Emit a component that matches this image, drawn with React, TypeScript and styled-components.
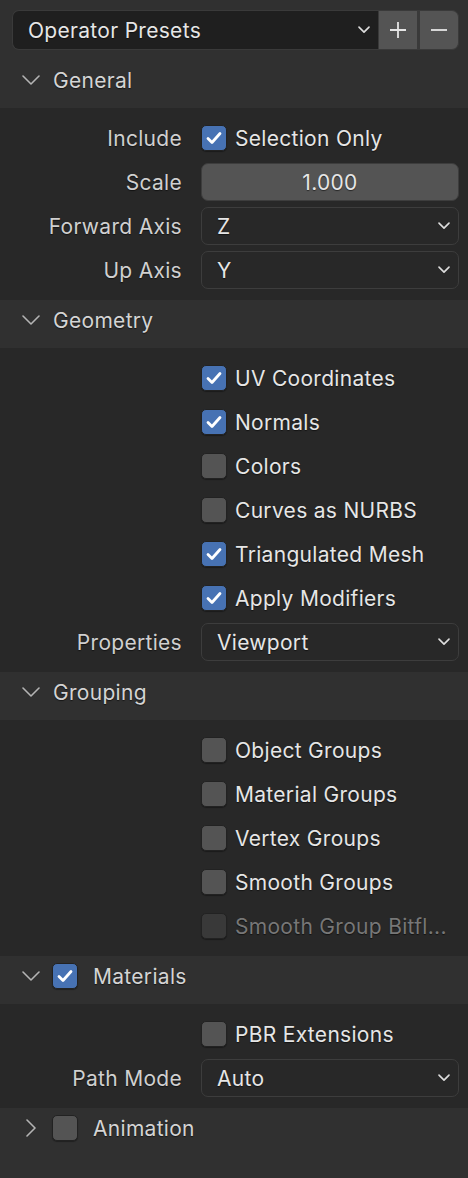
import React from 'react';
import styled, { createGlobalStyle } from 'styled-components';

const GlobalStyle = createGlobalStyle`
  html, body {
    margin: 0;
    padding: 0;
    background: #303030;
  }
  body {
    font-family: Inter, "Noto Sans", "Liberation Sans", sans-serif;
    -webkit-font-smoothing: antialiased;
  }
`;

const Panel = styled.div`
  width: 468px;
  min-height: 1178px;
  background: #303030;
  color: #e6e6e6;
  font-size: 21px;
  letter-spacing: 0.3px;
  text-shadow: 0 1px 1px rgba(0, 0, 0, 0.55);
`;

const PresetBar = styled.div`
  display: flex;
  height: 40px;
  padding: 10px 9px 10px 12px;
`;

const PresetSelect = styled.div`
  flex: 1;
  display: flex;
  align-items: center;
  justify-content: space-between;
  padding: 0 8px 0 15px;
  background: #1f1f1f;
  border: 1px solid #3a3a3a;
  border-right: none;
  border-radius: 7px 0 0 7px;
`;

const PresetButton = styled.div<{ $last?: boolean }>`
  width: 38px;
  display: flex;
  align-items: center;
  justify-content: center;
  background: #545454;
  border: 1px solid #3a3a3a;
  border-left: ${(p) => (p.$last ? '2px solid #3a3a3a' : '1px solid #3a3a3a')};
  border-radius: ${(p) => (p.$last ? '0 7px 7px 0' : '0')};
`;

const Header = styled.div`
  height: 48px;
  display: flex;
  align-items: center;
  padding: 0 0 8px 22px;
  box-sizing: border-box;
  background: #303030;
  color: #d4d4d4;
`;

const HeaderTitle = styled.span<{ $offset?: number }>`
  margin-left: ${(p) => p.$offset ?? 13}px;
`;

const Body = styled.div`
  background: #282828;
  padding: 8px 0 8px;
`;

const Row = styled.div`
  display: grid;
  grid-template-columns: 182px 1fr;
  column-gap: 19px;
  align-items: center;
  height: 44px;
  padding-right: 9px;
`;

const Label = styled.span`
  text-align: right;
  color: #d0d0d0;
`;

const CheckLine = styled.div<{ $disabled?: boolean }>`
  display: flex;
  align-items: center;
  gap: 8px;
  white-space: nowrap;
  color: ${(p) => (p.$disabled ? '#777777' : '#e6e6e6')};
`;

const Box = styled.div<{ $checked?: boolean; $disabled?: boolean }>`
  width: 26px;
  height: 26px;
  box-sizing: border-box;
  border-radius: 5px;
  border: 1px solid #222222;
  display: flex;
  align-items: center;
  justify-content: center;
  flex-shrink: 0;
  background: ${(p) => (p.$checked ? '#4772b3' : p.$disabled ? '#393939' : '#545454')};
  box-shadow: 0 1px 1px rgba(0, 0, 0, 0.35);
`;

const NumberField = styled.div`
  height: 38px;
  display: flex;
  align-items: center;
  justify-content: center;
  background: #545454;
  border: 1px solid #3d3d3d;
  border-radius: 7px;
  box-sizing: border-box;
`;

const SelectField = styled.div`
  height: 38px;
  display: flex;
  align-items: center;
  justify-content: space-between;
  padding: 0 8px 0 15px;
  background: #282828;
  border: 1px solid #3d3d3d;
  border-radius: 7px;
  box-sizing: border-box;
`;

const Footer = styled.div`
  height: 23px;
`;

const Chevron = ({ size = 12 }: { size?: number }) => (
  <svg width={size} height={size * 0.6} viewBox="0 0 12 7" fill="none">
    <polyline points="1,1 6,6 11,1" stroke="#dddddd" strokeWidth="1.6" strokeLinecap="round" strokeLinejoin="round" />
  </svg>
);

const Disclosure = ({ open }: { open: boolean }) =>
  open ? (
    <svg width="18" height="10" viewBox="0 0 18 10" fill="none">
      <polyline points="1,1 9,9 17,1" stroke="#b4b4b4" strokeWidth="1.6" strokeLinecap="round" strokeLinejoin="round" />
    </svg>
  ) : (
    <svg width="18" height="18" viewBox="0 0 18 18" fill="none">
      <polyline points="5,1 13,9 5,17" stroke="#b4b4b4" strokeWidth="1.6" strokeLinecap="round" strokeLinejoin="round" />
    </svg>
  );

const Check = () => (
  <svg width="18" height="16" viewBox="0 0 18 16" fill="none">
    <polyline points="3,8.5 7,12.5 15,3.5" stroke="#ffffff" strokeWidth="2.8" strokeLinecap="round" strokeLinejoin="round" />
  </svg>
);

const Checkbox = ({ checked, disabled }: { checked?: boolean; disabled?: boolean }) => (
  <Box $checked={checked} $disabled={disabled}>
    {checked && <Check />}
  </Box>
);

const CheckRow = ({ label, text, checked, disabled }: { label?: string; text: string; checked?: boolean; disabled?: boolean }) => (
  <Row>
    <Label>{label}</Label>
    <CheckLine $disabled={disabled}>
      <Checkbox checked={checked} disabled={disabled} />
      <span>{text}</span>
    </CheckLine>
  </Row>
);

const SelectRow = ({ label, value }: { label: string; value: string }) => (
  <Row>
    <Label>{label}</Label>
    <SelectField>
      <span>{value}</span>
      <Chevron />
    </SelectField>
  </Row>
);

const SectionHeader = ({ title, open = true, check }: { title: string; open?: boolean; check?: 'on' | 'off' }) => (
  <Header>
    <Disclosure open={open} />
    {check ? (
      <>
        <span style={{ width: 12 }} />
        <Checkbox checked={check === 'on'} />
        <HeaderTitle $offset={15}>{title}</HeaderTitle>
      </>
    ) : (
      <HeaderTitle>{title}</HeaderTitle>
    )}
  </Header>
);

export default function App() {
  return (
    <Panel>
      <GlobalStyle />
      <PresetBar>
        <PresetSelect>
          <span>Operator Presets</span>
          <Chevron />
        </PresetSelect>
        <PresetButton>
          <svg width="18" height="18" viewBox="0 0 18 18">
            <path d="M9 1v16M1 9h16" stroke="#e6e6e6" strokeWidth="1.8" />
          </svg>
        </PresetButton>
        <PresetButton $last>
          <svg width="18" height="18" viewBox="0 0 18 18">
            <path d="M1 9h16" stroke="#e6e6e6" strokeWidth="1.8" />
          </svg>
        </PresetButton>
      </PresetBar>

      <SectionHeader title="General" />
      <Body>
        <CheckRow label="Include" text="Selection Only" checked />
        <Row>
          <Label>Scale</Label>
          <NumberField>1.000</NumberField>
        </Row>
        <SelectRow label="Forward Axis" value="Z" />
        <SelectRow label="Up Axis" value="Y" />
      </Body>

      <SectionHeader title="Geometry" />
      <Body>
        <CheckRow text="UV Coordinates" checked />
        <CheckRow text="Normals" checked />
        <CheckRow text="Colors" />
        <CheckRow text="Curves as NURBS" />
        <CheckRow text="Triangulated Mesh" checked />
        <CheckRow text="Apply Modifiers" checked />
        <SelectRow label="Properties" value="Viewport" />
      </Body>

      <SectionHeader title="Grouping" />
      <Body>
        <CheckRow text="Object Groups" />
        <CheckRow text="Material Groups" />
        <CheckRow text="Vertex Groups" />
        <CheckRow text="Smooth Groups" />
        <CheckRow text="Smooth Group Bitfl..." disabled />
      </Body>

      <SectionHeader title="Materials" check="on" />
      <Body>
        <CheckRow text="PBR Extensions" />
        <SelectRow label="Path Mode" value="Auto" />
      </Body>

      <SectionHeader title="Animation" open={false} check="off" />
      <Footer />
    </Panel>
  );
}
